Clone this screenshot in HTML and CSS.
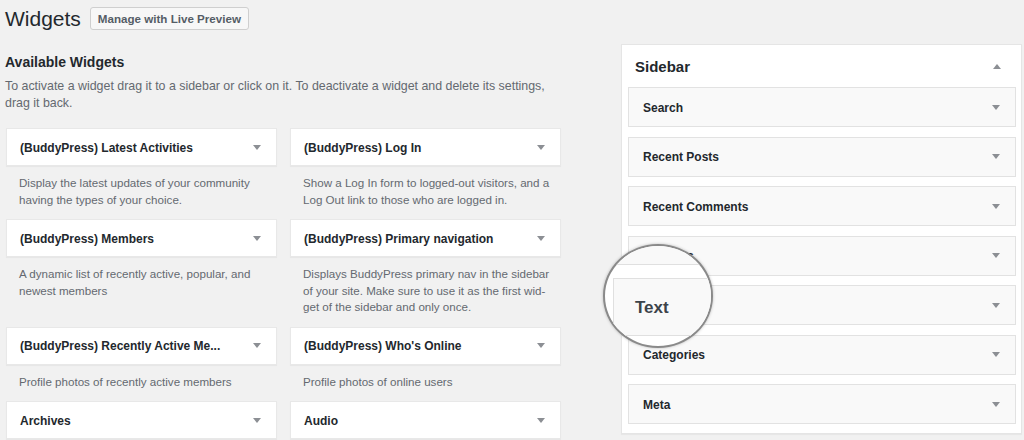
FILE: index.html
```html
<!DOCTYPE html>
<html lang="en">
<head>
<meta charset="utf-8">
<title>Widgets</title>
<link rel="stylesheet" href="styles.css">
</head>
<body>
<div class="page">
  <header class="top">
    <h1 class="title">Widgets</h1>
    <a class="btn">Manage with Live Preview</a>
  </header>
  <div class="main">
    <section class="avail">
      <h2 class="avail-title">Available Widgets</h2>
      <p class="intro">To activate a widget drag it to a sidebar or click on it. To deactivate a widget and delete its settings,<br>drag it back.</p>
      <div class="grid">
        <div class="widget">
          <div class="card"><span class="name">(BuddyPress) Latest Activities</span><span class="arrow"></span></div>
          <p class="desc">Display the latest updates of your community<br>having the types of your choice.</p>
        </div>
        <div class="widget">
          <div class="card"><span class="name">(BuddyPress) Log In</span><span class="arrow"></span></div>
          <p class="desc">Show a Log In form to logged-out visitors, and a<br>Log Out link to those who are logged in.</p>
        </div>
        <div class="widget">
          <div class="card"><span class="name">(BuddyPress) Members</span><span class="arrow"></span></div>
          <p class="desc">A dynamic list of recently active, popular, and<br>newest members</p>
        </div>
        <div class="widget">
          <div class="card"><span class="name">(BuddyPress) Primary navigation</span><span class="arrow"></span></div>
          <p class="desc">Displays BuddyPress primary nav in the sidebar<br>of your site. Make sure to use it as the first wid-<br>get of the sidebar and only once.</p>
        </div>
        <div class="widget">
          <div class="card"><span class="name">(BuddyPress) Recently Active Me...</span><span class="arrow"></span></div>
          <p class="desc">Profile photos of recently active members</p>
        </div>
        <div class="widget">
          <div class="card"><span class="name">(BuddyPress) Who's Online</span><span class="arrow"></span></div>
          <p class="desc">Profile photos of online users</p>
        </div>
        <div class="widget">
          <div class="card"><span class="name">Archives</span><span class="arrow"></span></div>
        </div>
        <div class="widget">
          <div class="card"><span class="name">Audio</span><span class="arrow"></span></div>
        </div>
      </div>
    </section>
    <aside class="sidebar">
      <div class="sb-head"><span class="sb-title">Sidebar</span><span class="arrow up"></span></div>
      <div class="sb-list">
        <div class="sb-item"><span class="name">Search</span><span class="arrow"></span></div>
        <div class="sb-item"><span class="name">Recent Posts</span><span class="arrow"></span></div>
        <div class="sb-item"><span class="name">Recent Comments</span><span class="arrow"></span></div>
        <div class="sb-item"><span class="name">Archives</span><span class="arrow"></span></div>
        <div class="sb-item sb-item-end"><span class="arrow"></span></div>
        <div class="sb-item"><span class="name">Categories</span><span class="arrow"></span></div>
        <div class="sb-item"><span class="name">Meta</span><span class="arrow"></span></div>
      </div>
      <div class="lens">
        <div class="lens-prev"></div>
        <div class="lens-item"><span class="lens-name">Text</span></div>
      </div>
    </aside>
  </div>
</div>
</body>
</html>
```
FILE: styles.css
```css
* { box-sizing: border-box; }
html, body { margin: 0; padding: 0; }
body {
  background: #f1f1f1;
  font-family: "Liberation Sans", Arial, sans-serif;
  color: #23282d;
  width: 1024px;
  height: 440px;
  overflow: hidden;
}
.page { padding: 5px 0 0 5px; }
.top { display: flex; align-items: center; gap: 9px; height: 27px; }
.title { margin: 0; font-size: 21px; font-weight: 400; line-height: 27px; color: #23282d; }
.btn {
  display: flex; align-items: center;
  height: 23px; padding: 0 7px;
  border: 1px solid #cfcfcf; border-radius: 3px;
  background: #f7f7f7;
  font-size: 11.6px; font-weight: 700; color: #555d66;
}
.main { display: flex; align-items: flex-start; margin-top: 12px; }
.avail { width: 556px; }
.avail-title { margin: 8px 0 0; font-size: 14px; line-height: 20px; font-weight: 700; color: #23282d; }
.intro { margin: 6px 0 0; font-size: 12.4px; line-height: 17px; color: #646970; white-space: nowrap; }
.grid {
  display: grid;
  grid-template-columns: 271px 271px;
  column-gap: 13px;
  row-gap: 11px;
  margin: 16px 0 0 1px;
  align-items: start;
}
.card {
  height: 38px;
  display: flex; align-items: center; justify-content: space-between;
  padding: 0 15px 0 13px;
  background: #fff;
  border: 1px solid #e8e8e8;
  box-shadow: 0 1px 1px rgba(0,0,0,.04);
}
.name { font-size: 12px; font-weight: 700; color: #23282d; white-space: nowrap; margin-top: 1px; }
.arrow {
  width: 0; height: 0;
  border-left: 4px solid transparent;
  border-right: 4px solid transparent;
  border-top: 5px solid #8c8f94;
}
.arrow.up { border-top: 0; border-bottom: 5px solid #8c8f94; }
.desc { margin: 0; padding: 9px 0 0 13px; font-size: 11.6px; line-height: 16.5px; color: #646970; white-space: nowrap; }
.sidebar {
  position: relative;
  margin-left: 60px;
  width: 401px;
  height: 390px;
  background: #fff;
  border: 1px solid #e5e5e5;
  box-shadow: 0 1px 1px rgba(0,0,0,.04);
}
.sb-head { height: 42px; display: flex; align-items: center; justify-content: space-between; padding: 0 20px 0 13px; }
.sb-title { font-size: 15px; font-weight: 700; color: #23282d; }
.sb-list { display: flex; flex-direction: column; gap: 9.5px; margin: 0 5px 0 6px; }
.sb-item {
  height: 40px;
  display: flex; align-items: center; justify-content: space-between;
  padding: 0 15px 0 14px;
  background: #f9f9f9;
  border: 1px solid #e2e2e2;
}
.sb-item-end { justify-content: flex-end; }
.lens {
  position: absolute;
  left: -19px; top: 199px;
  width: 110px; height: 104px;
  border: 2px solid #8a8a8a;
  border-radius: 50%;
  background: #fff;
  overflow: hidden;
  box-shadow: 0 0 3px rgba(0,0,0,.25);
}
.lens-prev {
  position: absolute;
  left: 8px; top: -50px;
  width: 200px; height: 69px;
  background: #f9f9f9;
  border: 1px solid #e0e0e0;
}
.lens-item {
  position: absolute;
  left: 8px; top: 32px;
  width: 200px; height: 58px;
  display: flex; align-items: center;
  padding-left: 21px;
  background: #f9f9f9;
  border: 1px solid #e0e0e0;
}
.lens-name { font-size: 17px; font-weight: 700; color: #3c434a; padding-top: 2px; }
```
